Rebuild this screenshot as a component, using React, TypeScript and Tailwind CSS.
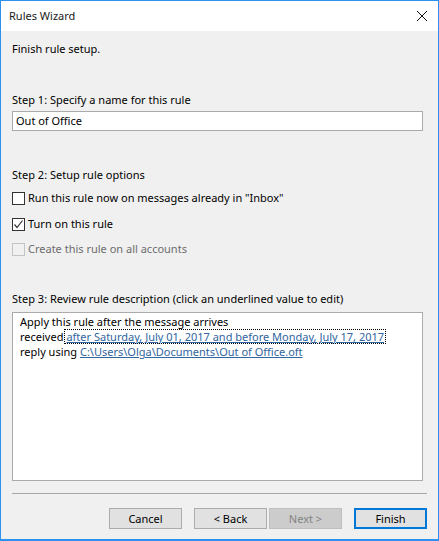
export default function App() {
  return (
    <div className="w-[439px] h-[541px] flex flex-col border border-[#2b90f0] border-b-2 bg-[#f0f0f0] text-[11px] leading-[16px] text-black font-['Noto_Sans',sans-serif] overflow-hidden">
      <div className="h-[30px] shrink-0 bg-white flex items-center justify-between pl-[8px] pr-[9px]">
        <span className="text-[#1a1a1a]">Rules Wizard</span>
        <svg width="12" height="12" viewBox="0 0 12 12" className="mr-[1px]">
          <path d="M1 1 L11 11 M11 1 L1 11" stroke="#111" strokeWidth="1" fill="none" />
        </svg>
      </div>
      <div className="flex-1 flex flex-col pl-[11px] pr-[11px]">
        <div className="mt-[10px] h-[16px]">Finish rule setup.</div>
        <div className="mt-[35px] h-[16px]">Step 1: Specify a name for this rule</div>
        <div className="mt-[3px] mr-[4px] h-[20px] border border-[#ababab] bg-white pl-[3px] leading-[17px]">Out of Office</div>
        <div className="mt-[36px] h-[16px]">Step 2: Setup rule options</div>
        <div className="mt-[7px] h-[16px] flex items-center gap-[3px]">
          <span className="w-[13px] h-[13px] border border-[#333] bg-white shrink-0" />
          <span>Run this rule now on messages already in "Inbox"</span>
        </div>
        <div className="mt-[10px] h-[16px] flex items-center gap-[3px]">
          <span className="w-[13px] h-[13px] border border-[#333] bg-white shrink-0 flex items-center justify-center">
            <svg width="11" height="11" viewBox="0 0 11 11"><path d="M1.5 5.5 L4 8.5 L9.5 1.5" stroke="#333" strokeWidth="1.2" fill="none" /></svg>
          </span>
          <span>Turn on this rule</span>
        </div>
        <div className="mt-[9px] h-[16px] flex items-center gap-[3px] text-[#6d6d6d]">
          <span className="w-[13px] h-[13px] border border-[#c4c4c4] bg-[#f0f0f0] shrink-0" />
          <span>Create this rule on all accounts</span>
        </div>
        <div className="mt-[34px] h-[16px]">Step 3: Review rule description (click an underlined value to edit)</div>
        <div className="mt-[5px] mr-[4px] h-[169px] border border-[#ababab] bg-white pl-[7px] pt-[1px] leading-[15px]">
          <div>Apply this rule after the message arrives</div>
          <div className="flex">
            <span>received</span>
            <span className="ml-[1px] pl-[2px] pr-[2px] outline-1 outline-dotted outline-black -outline-offset-1 text-[#2f65a0] underline">after Saturday, July 01, 2017 and before Monday, July 17, 2017</span>
          </div>
          <div>reply using <span className="text-[#2f65a0] underline">C:\Users\Olga\Documents\Out of Office.oft</span></div>
        </div>
        <div className="mt-[12px] h-[1px] bg-[#a8a8a8]" />
        <div className="mt-[14px] flex justify-end">
          <button className="w-[73px] h-[21px] border border-[#acacac] bg-[#e1e1e1] leading-none">Cancel</button>
          <button className="ml-[12px] w-[73px] h-[21px] border border-[#acacac] bg-[#e1e1e1] leading-none">&lt; Back</button>
          <button className="ml-[2px] w-[73px] h-[21px] border border-[#bfbfbf] bg-[#cccccc] text-[#838383] leading-none">Next &gt;</button>
          <button className="ml-[12px] w-[73px] h-[21px] border-2 border-[#0078d7] bg-[#e1e1e1] leading-none">Finish</button>
        </div>
      </div>
    </div>
  );
}
